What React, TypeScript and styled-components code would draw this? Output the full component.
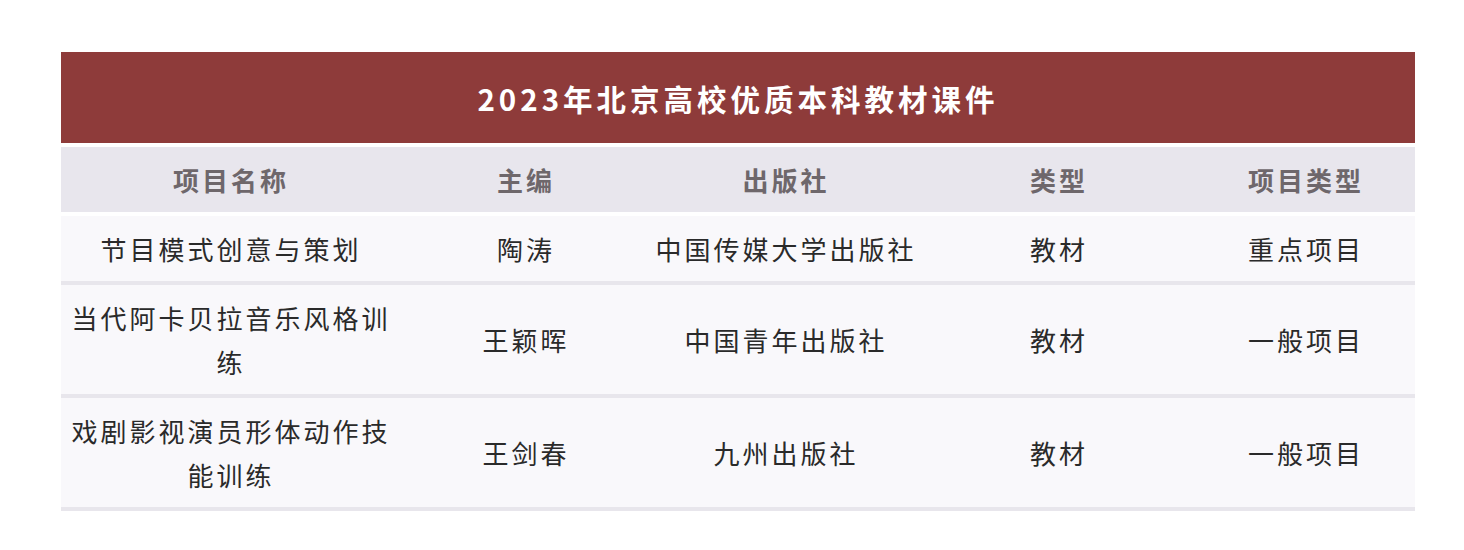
import React from 'react';
import styled, { createGlobalStyle } from 'styled-components';

const GlobalStyle = createGlobalStyle`
    html, body {
        margin: 0;
        padding: 0;
        background: #ffffff;
    }
    body {
        font-family: 'Noto Sans CJK SC', 'Noto Sans', sans-serif;
    }
`;

// column widths picked so the header labels land on the same centres as the source
const COLUMNS = '340px 250px 270px 276px 218px';

const Page = styled.div`
    padding: 52px 49px 38px 61px;
`;

const Table = styled.div`
    width: 1354px;
    display: flex;
    flex-direction: column;
`;

const Title = styled.div`
    height: 91px;
    margin-bottom: 4px;
    background: #8e3b3a;
    color: #ffffff;
    display: flex;
    align-items: center;
    justify-content: center;
    font-size: 29.5px;
    font-weight: 700;
    letter-spacing: 4px;
`;

const Row = styled.div<{ $head?: boolean }>`
    display: grid;
    grid-template-columns: ${COLUMNS};
    background: ${(p) => (p.$head ? '#e8e6ed' : '#f9f8fb')};
    ${(p) => (p.$head ? 'margin-bottom: 4px;' : 'border-bottom: 4px solid #e8e6ec;')}
`;

const Cell = styled.div<{ $head?: boolean }>`
    display: flex;
    align-items: center;
    justify-content: center;
    text-align: center;
    padding: 10.5px 4px;
    font-size: 26px;
    line-height: 44px;
    letter-spacing: 3px;
    font-weight: ${(p) => (p.$head ? 700 : 400)};
    color: ${(p) => (p.$head ? '#6e676b' : '#2a2a2a')};
`;

const headers = ['项目名称', '主编', '出版社', '类型', '项目类型'];

const rows = [
    ['节目模式创意与策划', '陶涛', '中国传媒大学出版社', '教材', '重点项目'],
    ['当代阿卡贝拉音乐风格训练', '王颖晖', '中国青年出版社', '教材', '一般项目'],
    ['戏剧影视演员形体动作技能训练', '王剑春', '九州出版社', '教材', '一般项目'],
];

export default function App() {
    return (
        <>
            <GlobalStyle />
            <Page>
                <Table>
                    <Title>2023年北京高校优质本科教材课件</Title>
                    <Row $head>
                        {headers.map((h) => (
                            <Cell key={h} $head>
                                {h}
                            </Cell>
                        ))}
                    </Row>
                    {rows.map((r) => (
                        <Row key={r[0]}>
                            {r.map((c, i) => (
                                <Cell key={i}>{c}</Cell>
                            ))}
                        </Row>
                    ))}
                </Table>
            </Page>
        </>
    );
}
